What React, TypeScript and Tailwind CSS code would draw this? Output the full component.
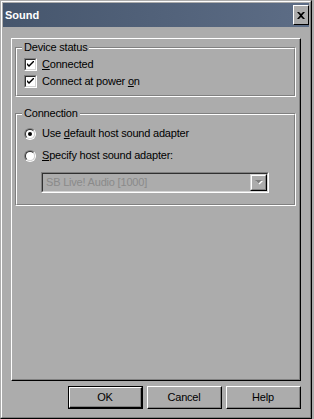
import React from "react";

const font = { fontFamily: '"Liberation Sans", Arial, sans-serif' };

function Check() {
  return (
    <div className="w-[13px] h-[13px] border-t border-l border-[#808080] border-r-white border-b-white border-r border-b">
      <div className="w-full h-full bg-white border-t border-l border-[#303030] border-r border-b border-r-[#d4d4d4] border-b-[#d4d4d4] flex items-center justify-center">
        <svg width="7" height="7" viewBox="0 0 7 7">
          <path d="M0 2 L0 4 L2 6 L7 1 L7 -1 L2 4 Z" fill="#000" />
        </svg>
      </div>
    </div>
  );
}

function Radio({ on }: { on?: boolean }) {
  return (
    <div className="w-[12px] h-[12px] rounded-full border border-t-[#808080] border-l-[#808080] border-r-white border-b-white">
      <div className="w-full h-full rounded-full bg-white border border-t-[#303030] border-l-[#303030] border-r-[#d4d4d4] border-b-[#d4d4d4] flex items-center justify-center">
        {on && <div className="w-[4px] h-[4px] rounded-full bg-black" />}
      </div>
    </div>
  );
}

function Group({ label, h, children }: { label: string; h: string; children: React.ReactNode }) {
  return (
    <div className={`relative w-[281px] ${h} border-t border-l border-[#808080] border-r border-b border-r-white border-b-white`}>
      <div className="h-full border-t border-l border-white border-r border-b border-r-[#808080] border-b-[#808080]">
        {children}
      </div>
      <span className="absolute left-[6px] -top-[7px] px-[2px] bg-[#acacac] leading-[13px]">{label}</span>
    </div>
  );
}

function Btn({ label, def }: { label: string; def?: boolean }) {
  return (
    <div className={`w-[75px] h-[23px] ${def ? "border border-black" : ""}`}>
      <div className="h-full border-t border-l border-white border-r border-b border-r-black border-b-black">
        <div className="h-full border-r border-b border-[#808080] border-t-0 border-l-0 flex items-center justify-center leading-none">
          {label}
        </div>
      </div>
    </div>
  );
}

export default function App() {
  return (
    <div className="w-[314px] h-[419px] bg-[#acacac] text-[11px] tracking-[-0.2px] text-black" style={font}>
      <div className="w-[312px] h-[419px] border-t border-l border-[#acacac] border-r border-b border-r-black border-b-black">
        <div className="h-full border-t border-l border-white border-r border-b border-r-[#808080] border-b-[#808080] p-[1px]">

          {/* title bar */}
          <div className="h-[24px] flex items-center justify-between pl-[2px] pr-[0px] bg-gradient-to-r from-[#46566d] to-[#5d6d86]">
            <span className="text-white font-bold tracking-normal">Sound</span>
            <div className="w-[16px] h-[20px] bg-[#acacac] border-t border-l border-white border-r border-b border-r-black border-b-black flex items-center justify-center">
              <svg width="8" height="7" viewBox="0 0 8 7">
                <path d="M0 0h2l2 2 2-2h2L5 3.5 8 7H6L4 5 2 7H0l3-3.5Z" fill="#000" />
              </svg>
            </div>
          </div>

          {/* page */}
          <div className="ml-[8px] mt-[11px] w-[290px] h-[343px] border-t border-l border-white border-r border-b border-r-black border-b-black">
            <div className="h-full border-r border-b border-[#808080] border-t-0 border-l-0 pl-[3px] pt-[8px]">

              <Group label="Device status" h="h-[50px]">
                <div className="pl-[7px] pt-[7px] flex flex-col">
                  <div className="h-[17px] flex items-center gap-[5px]">
                    <Check />
                    <span><u>C</u>onnected</span>
                  </div>
                  <div className="h-[17px] flex items-center gap-[5px]">
                    <Check />
                    <span>Connect at power <u>o</u>n</span>
                  </div>
                </div>
              </Group>

              <div className="mt-[16px]">
                <Group label="Connection" h="h-[93px]">
                  <div className="pl-[7px] pt-[10px] flex flex-col">
                    <div className="h-[17px] flex items-center gap-[6px]">
                      <Radio on />
                      <span>Use <u>d</u>efault host sound adapter</span>
                    </div>
                    <div className="h-[17px] mt-[5px] flex items-center gap-[6px]">
                      <Radio />
                      <span><u>S</u>pecify host sound adapter:</span>
                    </div>
                    <div className="ml-[17px] mt-[8px] w-[228px] h-[21px] border-t border-l border-[#808080] border-r border-b border-r-white border-b-white">
                      <div className="h-full border-t border-l border-[#303030] border-r border-b border-r-[#d4d4d4] border-b-[#d4d4d4] flex items-center justify-between pl-[3px] pr-[0px]">
                        <span className="text-[#8a8a8a]">SB Live! Audio [1000]</span>
                        <div className="w-[17px] h-[17px] border-t border-l border-[#d4d4d4] border-r border-b border-r-black border-b-black">
                          <div className="h-full border-t border-l border-white border-r border-b border-r-[#808080] border-b-[#808080] flex items-center justify-center">
                            <svg width="8" height="5" viewBox="0 0 8 5">
                              <path d="M1 1h7L4.5 4.5Z" fill="#fff" />
                              <path d="M0 0h7L3.5 3.5Z" fill="#808080" />
                            </svg>
                          </div>
                        </div>
                      </div>
                    </div>
                  </div>
                </Group>
              </div>
            </div>
          </div>

          {/* buttons */}
          <div className="ml-[8px] w-[290px] mt-[5px] flex justify-end gap-[4px]">
            <Btn label="OK" def />
            <Btn label="Cancel" />
            <Btn label="Help" />
          </div>
        </div>
      </div>
    </div>
  );
}
